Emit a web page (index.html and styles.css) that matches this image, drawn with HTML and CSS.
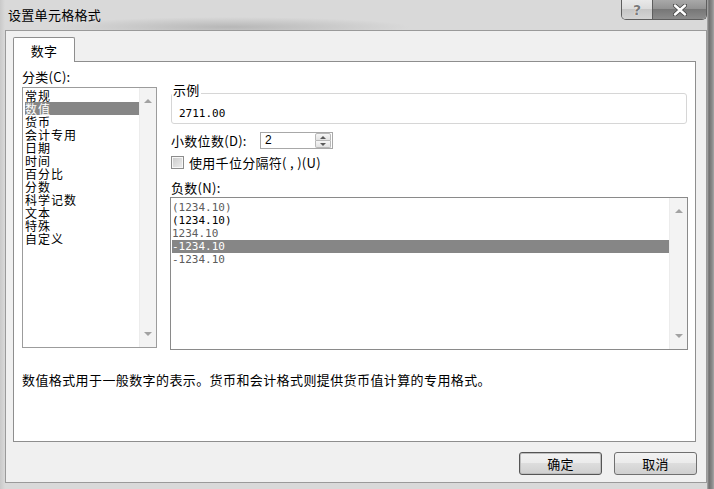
FILE: index.html
```html
<!DOCTYPE html>
<html lang="zh-CN">
<head>
  <meta charset="UTF-8" />
  <title>设置单元格格式</title>
  <link rel="stylesheet" href="styles.css">
</head>
<body>

  <div class="window">
    <div class="titlebar">
      <span class="title">设置单元格格式</span>
      <div class="caption">
        <span class="cap help">?</span>
        <span class="cap close">
          <svg width="14" height="12" viewBox="0 0 14 12">
            <path d="M2 1.5 L12 10.5 M12 1.5 L2 10.5" stroke="#4a4a4a" stroke-width="4.2" stroke-linecap="round"/>
            <path d="M2 1.5 L12 10.5 M12 1.5 L2 10.5" stroke="#fff" stroke-width="2.4" stroke-linecap="round"/>
          </svg>
        </span>
      </div>
    </div>

    <div class="client">
      <div class="tabs">
        <div class="tab">数字</div>
      </div>

      <div class="panel">
        <div class="panel-body">
          <div class="col-left">
            <div class="label">分类(C):</div>
            <div class="listbox cat">
              <ul class="items">
                <li>常规</li>
                <li class="sel">数值</li>
                <li>货币</li>
                <li>会计专用</li>
                <li>日期</li>
                <li>时间</li>
                <li>百分比</li>
                <li>分数</li>
                <li>科学记数</li>
                <li>文本</li>
                <li>特殊</li>
                <li>自定义</li>
              </ul>
              <div class="vscroll">
                <span class="arr up"></span>
                <span class="arr down"></span>
              </div>
            </div>
          </div>

          <div class="col-right">
            <div class="sample">
              <div class="sample-label">示例</div>
              <div class="sample-value">2711.00</div>
            </div>

            <div class="decimals">
              <span class="dec-label">小数位数(D):</span>
              <div class="spin">
                <span class="spin-val">2</span>
                <div class="spin-btns">
                  <span class="sb up"></span>
                  <span class="sb down"></span>
                </div>
              </div>
            </div>

            <div class="check">
              <span class="box"></span>
              <span>使用千位分隔符( , )(U)</span>
            </div>

            <div class="label neg-label">负数(N):</div>
            <div class="listbox neg">
              <ul class="items">
                <li class="red">(1234.10)</li>
                <li>(1234.10)</li>
                <li class="red">1234.10</li>
                <li class="sel">-1234.10</li>
                <li class="red">-1234.10</li>
              </ul>
              <div class="vscroll">
                <span class="arr up"></span>
                <span class="arr down"></span>
              </div>
            </div>
          </div>
        </div>

        <p class="desc">数值格式用于一般数字的表示。货币和会计格式则提供货币值计算的专用格式。</p>
      </div>

      <div class="buttons">
        <button class="btn default">确定</button>
        <button class="btn">取消</button>
      </div>
    </div>
  </div>

</body>
</html>
```

FILE: styles.css
```css
* {
  box-sizing: border-box;
}
body {
  margin: 0;
  font-family: "Noto Sans CJK SC", "Noto Sans", sans-serif;
  font-size: 13px;
  color: #000;
  background: #d6d6d6;
}
.window {
  width: 714px;
  height: 489px;
  display: flex;
  flex-direction: column;
  padding: 0 7px 6px 5px;
  background:
    linear-gradient(to right, rgba(0,0,0,0) 707px, #b0b0b0 707px, #707070 709px, #8a8a8a 712px, #a6a6a6 714px),
    radial-gradient(ellipse 180px 10px at 230px 27px, rgba(120,120,120,0.35), rgba(120,120,120,0)),
    linear-gradient(to right, #c9c9c9, #d9d9d9 5px, #d9d9d9 100%);
}

/* title bar */
.titlebar {
  height: 30px;
  display: flex;
  justify-content: space-between;
  align-items: flex-start;
  padding-left: 3px;
}
.title {
  padding-top: 7px;
  line-height: 15px;
  letter-spacing: 0.3px;
}
.caption {
  display: flex;
  height: 20px;
  border: 1px solid #5e5e5e;
  border-top: 0;
  border-radius: 0 0 5px 5px;
  overflow: hidden;
}
.cap {
  display: flex;
  align-items: center;
  justify-content: center;
}
.help {
  width: 31px;
  border-right: 1px solid #5e5e5e;
  background: linear-gradient(#e9e9e9, #dcdcdc 45%, #c6c6c6 50%, #d4d4d4);
  font: bold 14px "DejaVu Sans", sans-serif;
  color: #7a7a7a;
  text-shadow: 0 0 1px #fff, 0 0 1px #fff;
}
.close {
  width: 53px;
  background: linear-gradient(#a9a9a9, #939393 45%, #777 50%, #8c8c8c);
}

/* client area */
.client {
  flex: 1;
  display: flex;
  flex-direction: column;
  border: 1px solid #9a9a9a;
  background: #f0f0f0;
}
.tabs {
  display: flex;
  padding: 6px 0 0 7px;
}
.tab {
  position: relative;
  z-index: 1;
  width: 62px;
  height: 25px;
  margin-bottom: -1px;
  padding-top: 5px;
  border: 1px solid #8e8e8e;
  border-bottom: 0;
  border-radius: 2px 2px 0 0;
  background: #fff;
  text-align: center;
  line-height: 15px;
  letter-spacing: 0.3px;
}
.panel {
  height: 381px;
  margin: 0 10px 0 7px;
  padding: 7px 7px 0 8px;
  border: 1px solid #8e8e8e;
  background: #fff;
}
.panel-body {
  display: grid;
  grid-template-columns: 135px 1fr;
  column-gap: 13px;
}
.label {
  line-height: 15px;
  letter-spacing: 0.3px;
}

/* list boxes */
.listbox {
  display: flex;
  border: 1px solid #9c9c9c;
  background: #fff;
}
.items {
  flex: 1;
  list-style: none;
  margin: 0;
}
.items li {
  height: 13px;
  line-height: 13px;
  white-space: nowrap;
}
.sel {
  background: #868686;
  color: #fff;
}
.cat {
  height: 261px;
  margin-top: 3px;
}
.cat .items {
  padding: 1px 0 0 2px;
  font-size: 12px;
  letter-spacing: 1px;
}
.vscroll {
  width: 17px;
  display: flex;
  flex-direction: column;
  justify-content: space-between;
  background: #f3f3f3;
  border-left: 1px solid #ececec;
}
.arr {
  height: 26px;
  display: flex;
  align-items: center;
  justify-content: center;
}
.arr::before {
  content: "";
  border-left: 4px solid transparent;
  border-right: 4px solid transparent;
}
.arr.up::before {
  border-bottom: 4px solid #a2a2a2;
}
.arr.down::before {
  border-top: 4px solid #a2a2a2;
}

/* right column */
.sample {
  height: 31px;
  margin: 24px 1px 0;
  border: 1px solid #d6d6d6;
  border-radius: 3px;
}
.sample-label {
  width: fit-content;
  margin-top: -12px;
  padding: 0 1px;
  background: #fff;
  line-height: 15px;
  letter-spacing: 0.3px;
}
.sample-value {
  margin: 10px 0 0 7px;
  font: 11px/13px "DejaVu Sans Mono", monospace;
}
.decimals {
  display: flex;
  align-items: center;
  height: 17px;
  margin-top: 8px;
}
.dec-label {
  width: 90px;
  padding-left: 1px;
  line-height: 15px;
  letter-spacing: 0.3px;
}
.spin {
  width: 73px;
  height: 17px;
  display: flex;
  align-items: center;
  justify-content: space-between;
  padding: 0 1px 0 4px;
  border: 1px solid #a8a8a8;
  background: #fff;
}
.spin-val {
  font: 12px/15px "Liberation Sans", sans-serif;
}
.spin-btns {
  width: 16px;
  height: 15px;
  display: flex;
  flex-direction: column;
}
.sb {
  flex: 1;
  display: flex;
  align-items: center;
  justify-content: center;
  border: 1px solid #b8b8b8;
  background: linear-gradient(#f6f6f6, #e2e2e2);
}
.sb.up {
  border-radius: 2px 2px 0 0;
}
.sb.down {
  border-top: 0;
  border-radius: 0 0 2px 2px;
}
.sb::before {
  content: "";
  border-left: 3px solid transparent;
  border-right: 3px solid transparent;
}
.sb.up::before {
  border-bottom: 3px solid #5a5a5a;
}
.sb.down::before {
  border-top: 3px solid #5a5a5a;
}
.check {
  display: flex;
  align-items: center;
  height: 13px;
  margin-top: 7px;
  line-height: 15px;
  letter-spacing: 0.3px;
}
.box {
  width: 13px;
  height: 13px;
  margin: 0 5px 0 1px;
  border: 1px solid #8c8c8c;
  background: linear-gradient(135deg, #c9c9c9, #eeeeee);
  box-shadow: inset 0 0 0 1px #f7f7f7;
}
.neg-label {
  margin-top: 11px;
  padding-left: 1px;
}
.neg {
  height: 153px;
  margin-top: 2px;
  border-color: #8a8a8a;
}
.neg .items {
  padding: 3px 0 0 1px;
  font: 11px/13px "DejaVu Sans Mono", monospace;
}
.neg .vscroll {
  width: 18px;
}
.red {
  color: #5c5c5c;
}
.desc {
  margin: 22px 0 0;
  line-height: 15px;
  letter-spacing: 0.4px;
}

/* buttons */
.buttons {
  display: flex;
  justify-content: flex-end;
  gap: 12px;
  padding: 10px 9px 0 0;
}
.btn {
  width: 83px;
  height: 23px;
  padding: 0;
  border: 1px solid #707070;
  border-radius: 3px;
  background: linear-gradient(#f2f2f2, #ebebeb 50%, #dddddd 50%, #cfcfcf);
  font-family: inherit;
  font-size: 13px;
  line-height: 15px;
  letter-spacing: 0.3px;
  color: #000;
}
.btn.default {
  border-color: #555;
  box-shadow: inset 0 0 0 1px #bdbdbd;
}
```
